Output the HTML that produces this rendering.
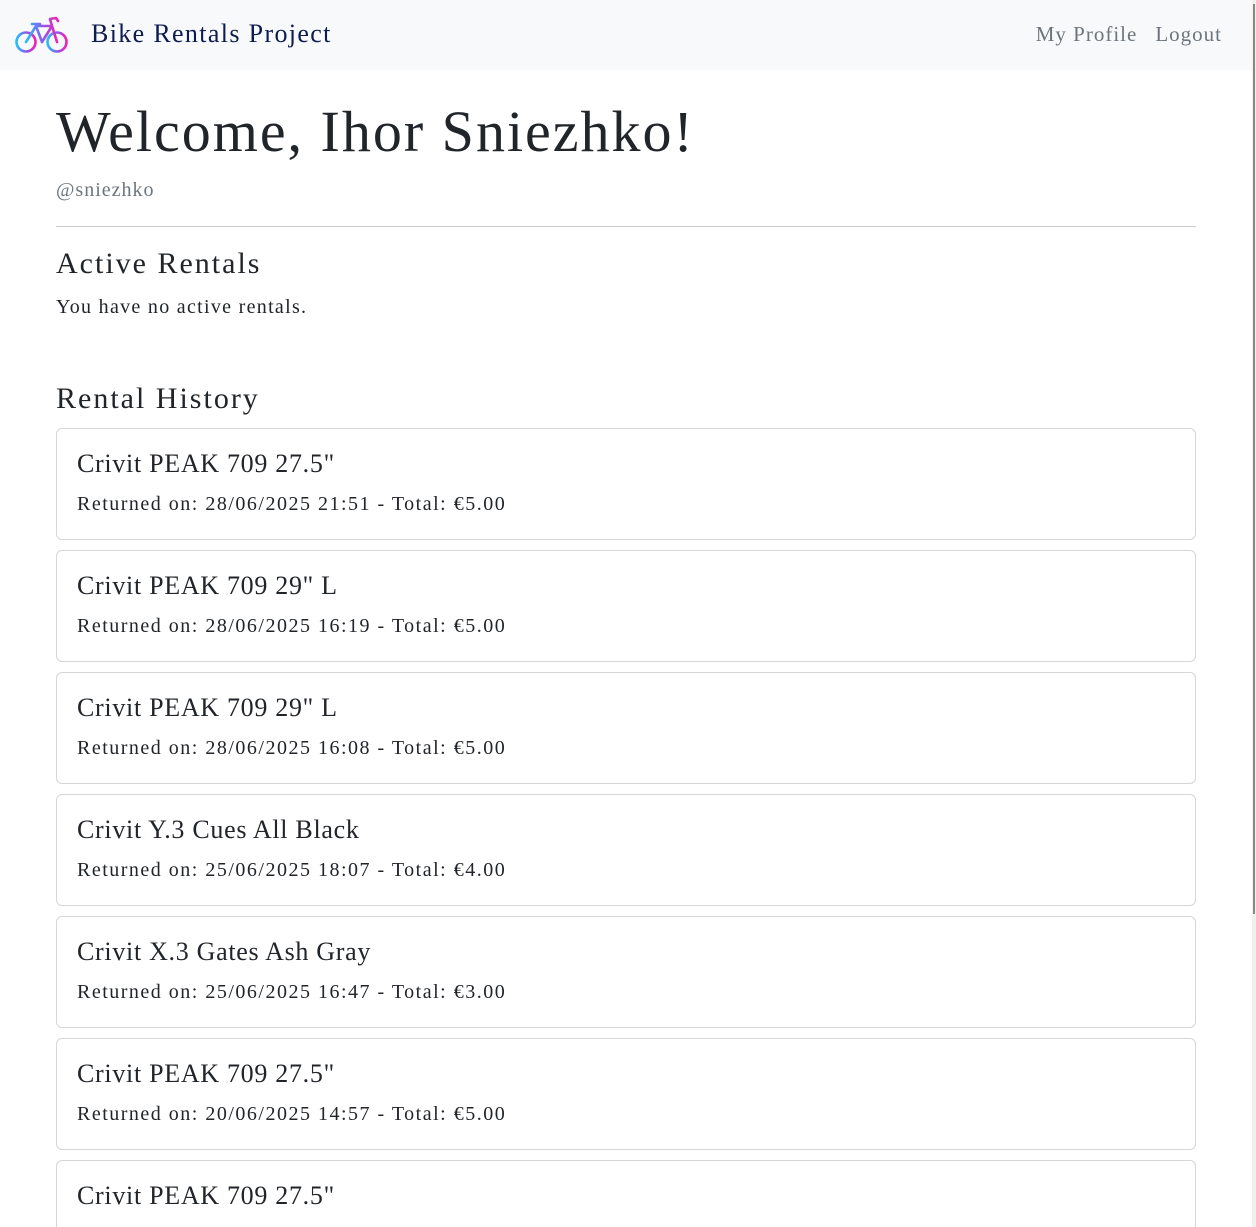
<!DOCTYPE html>
<html><head><meta charset="utf-8"><style>
*{box-sizing:border-box;margin:0;padding:0}
html,body{width:1256px;height:1227px;overflow:hidden}
body{background:#fff;font-family:"Liberation Serif",serif;color:#212529;position:relative}
.nav{position:absolute;left:0;top:0;width:1252px;height:70px;background:#f8f9fa}
.brand{position:absolute;left:91px;top:19px;font-size:26px;color:#0d1b4f;letter-spacing:1.35px}
.links{position:absolute;right:30px;top:22px;font-size:21px;color:#6c757d;letter-spacing:1px}
.links span{margin-left:18px}
.sb{position:absolute;right:0;top:0;width:4px;height:1227px;background:#f0f0f0}
.sb i{position:absolute;left:1px;top:4px;width:2px;height:910px;background:#888}
h1{position:absolute;left:56px;top:98px;font-size:58px;font-weight:normal;color:#212529;letter-spacing:2px}
.user{position:absolute;left:56px;top:179px;font-size:20px;color:#6c757d;letter-spacing:1px}
hr{position:absolute;left:56px;top:226px;width:1140px;border:0;border-top:1px solid #ccc}
h2{position:absolute;left:56px;font-size:30px;font-weight:normal;letter-spacing:2px}
.p{position:absolute;left:56px;top:296px;font-size:20px;letter-spacing:1.3px}
.card{position:absolute;left:56px;width:1140px;height:112px;border:1px solid #d4d6d8;border-radius:6px}
.card b{position:absolute;left:20px;top:20px;font-size:26px;font-weight:normal;letter-spacing:0.7px}
.card span{position:absolute;left:20px;top:64px;font-size:20px;letter-spacing:1.5px}
</style></head><body>
<div class="nav">
<svg style="position:absolute;left:14px;top:15px" width="56" height="40" viewBox="0 0 56 40">
<defs><linearGradient id="g" x1="0" x2="1"><stop offset="0" stop-color="#22c0f5"/><stop offset="0.5" stop-color="#8a5cf0"/><stop offset="1" stop-color="#f020b0"/></linearGradient></defs>
<g fill="none" stroke="url(#g)" stroke-width="2.6" stroke-linecap="round" stroke-linejoin="round">
<circle cx="12" cy="27" r="9.5"/><circle cx="43" cy="27" r="9.5"/>
<path d="M12 27 L22 11 L38 11 L43 27 M22 11 L28 27 L38 11 M18 9 L26 9 M38 11 L36 4 L42 3 L44 6"/>
</g></svg>
<div class="brand">Bike Rentals Project</div>
<div class="links"><span>My Profile</span><span>Logout</span></div>
</div>
<div class="sb"><i></i></div>
<h1>Welcome, Ihor Sniezhko!</h1>
<div class="user">@sniezhko</div>
<hr>
<h2 style="top:247px">Active Rentals</h2>
<div class="p">You have no active rentals.</div>
<h2 style="top:382px">Rental History</h2>
<div class="card" style="top:428px"><b>Crivit PEAK 709 27.5"</b><span>Returned on: 28/06/2025 21:51 - Total: €5.00</span></div>
<div class="card" style="top:550px"><b>Crivit PEAK 709 29" L</b><span>Returned on: 28/06/2025 16:19 - Total: €5.00</span></div>
<div class="card" style="top:672px"><b>Crivit PEAK 709 29" L</b><span>Returned on: 28/06/2025 16:08 - Total: €5.00</span></div>
<div class="card" style="top:794px"><b>Crivit Y.3 Cues All Black</b><span>Returned on: 25/06/2025 18:07 - Total: €4.00</span></div>
<div class="card" style="top:916px"><b>Crivit X.3 Gates Ash Gray</b><span>Returned on: 25/06/2025 16:47 - Total: €3.00</span></div>
<div class="card" style="top:1038px"><b>Crivit PEAK 709 27.5"</b><span>Returned on: 20/06/2025 14:57 - Total: €5.00</span></div>
<div class="card" style="top:1160px"><b>Crivit PEAK 709 27.5"</b></div>
</body></html>
